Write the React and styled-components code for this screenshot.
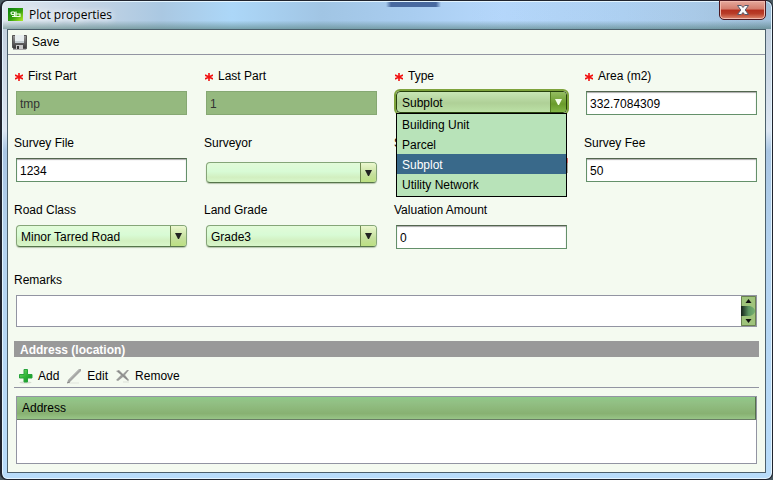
import React from "react";
import styled, { createGlobalStyle, css } from "styled-components";

const GlobalStyle = createGlobalStyle`
  *, *::before, *::after { box-sizing: border-box; }
  body { margin: 0; background: #4a5a62; }
  button, input, select, textarea { font: inherit; color: inherit; margin: 0; }
`;

const Window = styled.main`
  display: flex;
  flex-direction: column;
  min-height: 100vh;
  padding: 0 6px 6px 5px;
  border: solid #20242e;
  border-width: 1px 1px 1px 2px;
  border-radius: 7px;
  font: 12px/16px "Liberation Sans", Arial, sans-serif;
  color: #000;
  background:
    linear-gradient(90deg, transparent, #48699f 5px 50px, transparent) 384px 0 / 55px 6px no-repeat,
    linear-gradient(90deg, transparent 0 60%, #1c4a6011 90%, #1c4a6022) 0 0 / 100% 28px no-repeat,
    linear-gradient(180deg, transparent 0 70%, #56807c99 100%) 0 0 / 100% 28px no-repeat,
    linear-gradient(90deg, #e2e9f0, #c2d3e4 90px, #aac8e2 160px, #acd7f8 230px, #a1c5e4 320px, #a9cdf0 410px, #b6d8fc 500px, #b4d6f8 620px, #b2cfe9) 0 0 / 100% 28px no-repeat,
    linear-gradient(180deg, #bccad8 0, #dce6f2 130px, #a9c6e3 150px, #b4d3ef 250px, #b8dcfa);
  box-shadow: inset 0 0 0 1px #e4f5ff;
`;

const TitleBar = styled.header`
  display: flex;
  align-items: flex-start;
  height: 28px;
  padding: 7px 0 0 1px;
`;

const Title = styled.h1`
  flex: 1;
  margin: -2px 0 0 6px;
  font: 12px/17px "Open Sans", "Noto Sans", sans-serif;
  text-shadow: 0 0 6px #fff, 0 0 8px #fff;
`;

const CloseButton = styled.button`
  display: grid;
  place-items: center;
  width: 47px;
  height: 20px;
  margin-top: -8px;
  padding: 0;
  border: 1px solid #4b1820;
  border-radius: 0 0 5px 5px;
  background: linear-gradient(180deg, #e5a99c 0, #d37c6c 45%, #b32f1e 50%, #b83d28 70%, #df8a70 100%);
  box-shadow: inset 0 0 0 1px #f0b9ad;
`;

const Client = styled.form`
  flex: 1;
  display: flex;
  flex-direction: column;
  border: 1px solid #4c606c;
  background: #f4faf0;
`;

const Toolbar = styled.div`
  display: flex;
  align-items: center;
  gap: 7px;
  height: 25px;
  padding-left: 4px;
  border-bottom: 1px solid #9294a2;
`;

const ToolButton = styled.button`
  display: flex;
  align-items: center;
  gap: 5px;
  padding: 0;
  border: 0;
  background: none;
  line-height: 18px;
`;

const Body = styled.div`
  flex: 1;
  display: flex;
  flex-direction: column;
  padding: 13px 8px 8px;
`;

const FieldGrid = styled.div`
  display: grid;
  grid-template-columns: repeat(4, minmax(0, 1fr));
  gap: 19px;
`;

const Field = styled.div`
  position: relative;
  display: flex;
  flex-direction: column;
  height: 48px;
`;

const Label = styled.label`
  display: flex;
  align-items: center;
  gap: 5px;
  height: 16px;
  margin: 0 0 7px ${(p) => (p.$required ? "-1px" : "-2px")};
`;

const TextInput = styled.input`
  width: 100%;
  height: 24px;
  padding: 2px 3px 0;
  border: 1px solid #64906a;
  border-top-color: #53664f;
  border-radius: 0;
  background: #fff;
  box-shadow: inset 0 1px 1px #aaa;
  outline: none;
  &:disabled {
    border-color: #86a873;
    background: #95b97f;
    color: #333;
    box-shadow: none;
  }
`;

const SelectBox = styled.div`
  position: relative;
  display: flex;
  width: 100%;
  height: 22px;
  margin-top: ${(p) => (p.$lowered ? "4px" : "0")};
  overflow: hidden;
  border: 1px solid #85a578;
  border-bottom-color: #56754a;
  border-radius: 4px;
  background: linear-gradient(180deg, #e2fbd9 0, #d8fbd5 45%, #d2efc0 75%, #d9f7cb 100%);
  box-shadow: 0 1px 1px #b5c4ac;
  ${(p) =>
    p.$open &&
    css`
      border-color: #26410d;
      background: linear-gradient(180deg, #c8e6b5 0, #afd097 55%, #bce1a6 100%);
      box-shadow: 0 0 0 2px #7ea33c;
    `}
`;

const Select = styled.select`
  flex: 1;
  min-width: 0;
  padding: 2px 20px 0 ${(p) => (p.$open ? "5px" : "4px")};
  border: 0;
  outline: none;
  appearance: none;
  background: none;
`;

const SelectArrow = styled.span`
  position: absolute;
  inset: 0 0 0 auto;
  display: grid;
  place-items: center;
  width: 16px;
  border-left: 1px solid ${(p) => (p.$open ? "#527b20" : "#718b51")};
  color: ${(p) => (p.$open ? "#f4ffe9" : "#222")};
  background: ${(p) =>
    p.$open
      ? "linear-gradient(180deg, #94bd61, #6a9b2b 60%, #82b646)"
      : "linear-gradient(180deg, #ebf8cf, #c5df9d 60%, #bce082)"};
  pointer-events: none;
`;

const Popup = styled.ul`
  position: absolute;
  top: 45px;
  left: 0;
  right: 0;
  z-index: 2;
  margin: 0;
  padding: 0 0 2px;
  border: 1px solid #000;
  background: #b8e3b9;
  list-style: none;
`;

const PopupItem = styled.li`
  height: 20px;
  padding-left: 5px;
  line-height: 22px;
  color: ${(p) => (p.$selected ? "#fff" : "#000")};
  background: ${(p) => (p.$selected ? "#39698a" : "none")};
`;

const CoveredRow = styled.div`
  display: flex;
  justify-content: flex-end;
  margin-right: -1px;
`;

const Remarks = styled.div`
  display: flex;
  flex-direction: column;
  margin-top: 22px;
`;

const RemarksBox = styled.div`
  display: flex;
  height: 32px;
  border: 1px solid #9294a2;
  background: #fff;
`;

const TextArea = styled.textarea`
  flex: 1;
  min-width: 0;
  padding: 4px;
  border: 0;
  outline: none;
  resize: none;
  overflow: hidden;
  background: none;
`;

const SectionTitle = styled.h2`
  height: 16px;
  margin: 14px -2px 0;
  padding-left: 6px;
  font: bold 12px/18px "Liberation Sans", Arial, sans-serif;
  color: #fff;
  background: #999;
`;

const ListToolbar = styled(Toolbar)`
  height: 31px;
  margin: 0 -2px 8px;
  padding: 7px 0 0 4px;
`;

const TableFrame = styled.div`
  flex: 1;
  min-height: 68px;
  border: 1px solid #9294a2;
  background: #fff;
`;

const Table = styled.table`
  width: 100%;
  border-collapse: collapse;
`;

const HeaderCell = styled.th`
  height: 22px;
  padding: 1px 5px 0;
  border-right: 1px solid #53704a;
  border-bottom: 1px solid #697c65;
  font-weight: normal;
  text-align: left;
  background: linear-gradient(180deg, #8fc988 0, #92c084 25%, #88b172 75%, #98c587 100%);
`;

const Arrow = () => (
  <svg width="7" height="6" viewBox="0 0 7 6" aria-hidden="true">
    <path d="M0 0h7L4 6H3z" fill="currentColor" />
  </svg>
);

const AppIcon = () => (
  <svg width="15" height="13" viewBox="0 0 15 13" aria-hidden="true">
    <defs>
      <linearGradient id="app" x1="0" y1="0" x2="1" y2="1">
        <stop stopColor="#087e10" />
        <stop offset=".55" stopColor="#35a10d" />
        <stop offset="1" stopColor="#b4ee28" />
      </linearGradient>
    </defs>
    <path d="M0 0h15v13H0z" fill="url(#app)" />
    <path d="M6.500 4H4Q3 4 3 5t1 1.500h2.500M6.500 4v3.500q0 1-1 1H4M8 3.500v5h4V6H8M6 8.500h6" fill="none" stroke="#efffe8" strokeWidth="1.2" />
  </svg>
);

const CloseIcon = () => (
  <svg width="14" height="12" viewBox="0 0 14 12" aria-hidden="true">
    <path d="M1.500 1.500h3.800L7 3.500l1.700-2h3.800L9.200 6l3.300 4.500H8.700L7 8.500l-1.700 2H1.500L4.800 6z" fill="#fafafa" stroke="#565a6b" />
  </svg>
);

const SaveIcon = () => (
  <svg width="15" height="15" viewBox="0 0 15 15" aria-hidden="true">
    <defs>
      <linearGradient id="disk" x1="0" y1="0" x2="0" y2="1">
        <stop stopColor="#999" />
        <stop offset=".5" stopColor="#666" />
        <stop offset="1" stopColor="#343434" />
      </linearGradient>
    </defs>
    <path d="M.5.5h14v13.200H1.800L.5 12.500z" fill="url(#disk)" stroke="#555" />
    <path d="M3 0h9v8H3z" fill="#e8eef0" />
    <path d="M3 6h9v2H3z" fill="#c4cdd0" />
    <path d="M4 10h7v4H4z" fill="#c9c9c9" />
    <path d="M5 11h2v3H5z" fill="#333" />
    <path d="M1 14.500h13" stroke="#aaa" />
  </svg>
);

const AddIcon = () => (
  <svg width="15" height="16" viewBox="0 0 15 16" aria-hidden="true">
    <defs>
      <linearGradient id="add" x1="0" y1="0" x2="1" y2="1">
        <stop stopColor="#7de077" />
        <stop offset=".5" stopColor="#31b637" />
        <stop offset="1" stopColor="#078b20" />
      </linearGradient>
    </defs>
    <ellipse cx="7.5" cy="14.5" rx="6" ry="1" fill="#d5ddd1" />
    <path d="M6 1.500h3.500v5h4.500v3.500H9.500v4H6v-4H1.500V6.500H6z" fill="url(#add)" stroke="#27a43b" />
  </svg>
);

const EditIcon = () => (
  <svg width="16" height="16" viewBox="0 0 16 16" aria-hidden="true">
    <path d="M2 15h11" stroke="#e0e4dc" />
    <path d="M1 15l1-3L13 1l2 0v2L4 14z" fill="#a5a7a4" />
    <path d="M3 11.500L13 1.500" stroke="#c0c2bf" />
    <path d="M1 15l3-1" stroke="#888" />
  </svg>
);

const RemoveIcon = () => (
  <svg width="15" height="15" viewBox="0 0 15 15" aria-hidden="true">
    <path d="M8 14h6" stroke="#dce1d8" />
    <path d="M1 3l3-1 4 4 4-4 2 0-4 5 4 5-1 1-5-4-5 4-2-1 5-5z" fill="#9b9c9a" />
    <path d="M3 3l9 8" stroke="#858685" />
  </svg>
);

const RequiredMark = () => (
  <svg width="8" height="9" viewBox="0 0 8 9" aria-label="required">
    <path d="M4 1v8M0 3l8 4M0 7l8-4" stroke="#f21212" strokeWidth="1.6" />
  </svg>
);

const ScrollBar = () => (
  <svg width="15" height="30" viewBox="0 0 15 30" aria-hidden="true">
    <defs>
      <linearGradient id="thumb">
        <stop stopColor="#152019" />
        <stop offset=".55" stopColor="#5c9661" />
        <stop offset="1" stopColor="#74af70" />
      </linearGradient>
    </defs>
    <path d="M0 0h15v30H0z" fill="#9fc47b" />
    <path d="M.5.5h14v29H.5z" fill="none" stroke="#698051" />
    <path d="M0 10h9q5 2 5 5t-5 5H0z" fill="url(#thumb)" />
    <path d="M7.500 3l3 4h-6zM7.500 27l3-4h-6z" fill="#111" />
  </svg>
);

const CalendarIcon = () => (
  <svg width="16" height="15" viewBox="0 0 16 15" aria-hidden="true">
    <path d="M0 0h16v15H0z" fill="#aaa59c" />
    <path d="M0 0h16v5H0z" fill="#d66767" />
  </svg>
);

function FieldLabel({ id, required, children }) {
  return (
    <Label htmlFor={id} $required={required}>
      {required && <RequiredMark />}
      {children}
    </Label>
  );
}

function TextField({ id, label, required, value, disabled }) {
  return (
    <Field>
      <FieldLabel id={id} required={required}>{label}</FieldLabel>
      <TextInput id={id} defaultValue={value} disabled={disabled} />
    </Field>
  );
}

function SelectField({ id, label, required, options, value, open, lowered }) {
  return (
    <Field>
      <FieldLabel id={id} required={required}>{label}</FieldLabel>
      <SelectBox $open={open} $lowered={lowered}>
        <Select id={id} defaultValue={value} $open={open}>
          {options.map((o) => <option key={o}>{o}</option>)}
        </Select>
        <SelectArrow $open={open}><Arrow /></SelectArrow>
      </SelectBox>
      {open && (
        <Popup role="listbox" aria-label={label}>
          {options.map((o) => (
            <PopupItem key={o} role="option" aria-selected={o === value} $selected={o === value}>{o}</PopupItem>
          ))}
        </Popup>
      )}
    </Field>
  );
}

const plotTypes = ["Building Unit", "Parcel", "Subplot", "Utility Network"];

export default function App() {
  return (
    <>
      <GlobalStyle />
      <Window>
        <TitleBar>
          <AppIcon />
          <Title>Plot properties</Title>
          <CloseButton type="button" aria-label="Close"><CloseIcon /></CloseButton>
        </TitleBar>
        <Client onSubmit={(e) => e.preventDefault()}>
          <Toolbar>
            <ToolButton type="submit"><SaveIcon />Save</ToolButton>
          </Toolbar>
          <Body>
            <FieldGrid>
              <TextField id="first" label="First Part" required value="tmp" disabled />
              <TextField id="last" label="Last Part" required value="1" disabled />
              <SelectField id="type" label="Type" required open options={plotTypes} value="Subplot" />
              <TextField id="area" label="Area (m2)" required value="332.7084309" />
              <TextField id="file" label="Survey File" value="1234" />
              <SelectField id="surveyor" label="Surveyor" options={[""]} value="" lowered />
              <Field>
                <Label as="span">S</Label>
                <CoveredRow><CalendarIcon /></CoveredRow>
              </Field>
              <TextField id="fee" label="Survey Fee" value="50" />
              <SelectField id="road" label="Road Class" options={["Minor Tarred Road"]} value="Minor Tarred Road" />
              <SelectField id="grade" label="Land Grade" options={["Grade3"]} value="Grade3" />
              <TextField id="valuation" label="Valuation Amount" value="0" />
            </FieldGrid>
            <Remarks>
              <FieldLabel id="remarks">Remarks</FieldLabel>
              <RemarksBox>
                <TextArea id="remarks" />
                <ScrollBar />
              </RemarksBox>
            </Remarks>
            <SectionTitle>Address (location)</SectionTitle>
            <ListToolbar>
              <ToolButton type="button"><AddIcon />Add</ToolButton>
              <ToolButton type="button"><EditIcon />Edit</ToolButton>
              <ToolButton type="button"><RemoveIcon />Remove</ToolButton>
            </ListToolbar>
            <TableFrame>
              <Table>
                <thead>
                  <tr><HeaderCell scope="col">Address</HeaderCell></tr>
                </thead>
              </Table>
            </TableFrame>
          </Body>
        </Client>
      </Window>
    </>
  );
}
